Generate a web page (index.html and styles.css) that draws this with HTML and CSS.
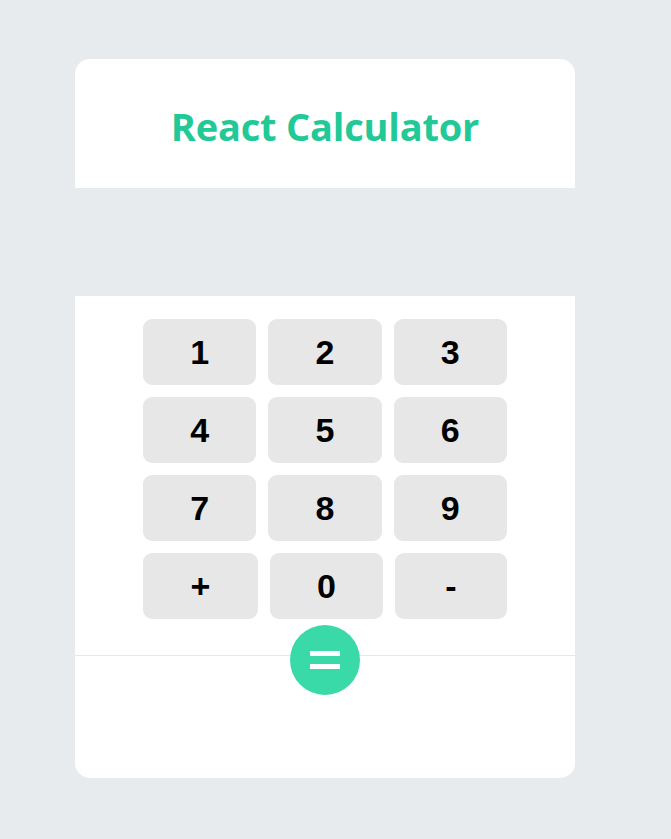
FILE: index.html
```html
<!DOCTYPE html>
<html lang="en">
<head>
<meta charset="utf-8">
<title>React Calculator</title>
<link rel="stylesheet" href="styles.css">
</head>
<body>
  <div class="card">
    <header class="card-header">
      <h1 class="title">React Calculator</h1>
    </header>
    <div class="display"></div>
    <div class="keypad">
      <div class="key-row">
        <button class="key">1</button>
        <button class="key">2</button>
        <button class="key">3</button>
      </div>
      <div class="key-row">
        <button class="key">4</button>
        <button class="key">5</button>
        <button class="key">6</button>
      </div>
      <div class="key-row">
        <button class="key">7</button>
        <button class="key">8</button>
        <button class="key">9</button>
      </div>
      <div class="key-row">
        <button class="key key-wide">+</button>
        <button class="key">0</button>
        <button class="key key-narrow">-</button>
      </div>
    </div>
    <footer class="card-footer">
      <button class="equals" aria-label="equals"><span class="bar"></span><span class="bar"></span></button>
    </footer>
  </div>
</body>
</html>
```

FILE: styles.css
```css
* { box-sizing: border-box; }

html, body {
  margin: 0;
  padding: 0;
}

body {
  background: #e8ebee;
  font-family: "Liberation Sans", Arial, sans-serif;
  padding-top: 59px;
  padding-left: 75px;
  min-height: 839px;
}

.card {
  width: 500px;
  height: 719px;
  background: #ffffff;
  border-radius: 15px;
  overflow: hidden;
  display: flex;
  flex-direction: column;
}

.card-header {
  height: 129px;
  display: flex;
  align-items: center;
  justify-content: center;
}

.title {
  margin: 0;
  padding-top: 5px;
  font-family: "Open Sans", "Noto Sans", sans-serif;
  font-weight: 700;
  font-size: 38px;
  color: #22c997;
  letter-spacing: -0.2px;
}

.display {
  height: 108px;
  background: #e7ebee;
}

.keypad {
  padding: 23px 0 36px 68px;
  display: flex;
  flex-direction: column;
  gap: 12px;
}

.key-row {
  display: flex;
  gap: 12px;
  width: 364px;
}

.key {
  flex: 1 1 0;
  height: 66px;
  border: none;
  border-radius: 9px;
  background: #e7e7e7;
  color: #000;
  font-family: "Liberation Sans", Arial, sans-serif;
  font-weight: 700;
  font-size: 34px;
  padding: 0;
  display: flex;
  align-items: center;
  justify-content: center;
}

.key-wide { flex-grow: 1.018; }
.key-narrow { flex-grow: 0.991; }

.card-footer {
  flex: 1;
  border-top: 1px solid #e8e8e8;
  display: flex;
  justify-content: center;
}

.equals {
  margin-top: -31px;
  width: 70px;
  height: 70px;
  border-radius: 50%;
  border: none;
  background: #3ad9a8;
  display: flex;
  flex-direction: column;
  align-items: center;
  justify-content: center;
  gap: 8px;
  padding: 0;
}

.bar {
  display: block;
  width: 30px;
  height: 5px;
  background: #ffffff;
}
```
